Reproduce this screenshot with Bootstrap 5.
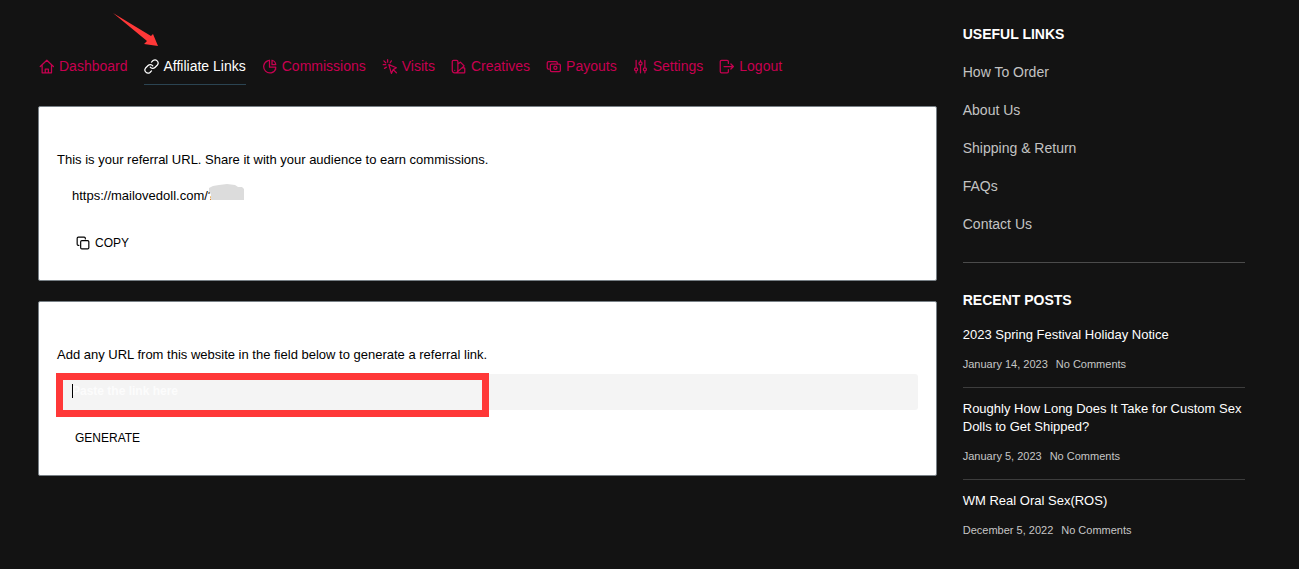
<!DOCTYPE html>
<html lang="en">
<head>
<meta charset="utf-8">
<meta name="viewport" content="width=device-width, initial-scale=1">
<title>Affiliate Links</title>
<link href="https://cdn.jsdelivr.net/npm/bootstrap@5.3.0/dist/css/bootstrap.min.css" rel="stylesheet">
<style>
  body { background: #131313; color: #000; font: 13px/18px "Liberation Sans", Arial, sans-serif; }
  .page { padding: 25px 54px 20px 38px; border-bottom: 1px solid #000; }
  .page > .row { --bs-gutter-x: 26px; }
  a { color: inherit; text-decoration: none; }
  .portal-nav { gap: 8px 16px; padding: 31px 0 21px 1px; font-size: 14px; line-height: 20px; color: #c70050; }
  .portal-nav .nav-link { display: flex; align-items: center; gap: 5px; padding: 0 0 8px; border-bottom: 1px solid transparent; color: inherit; }
  .portal-nav .nav-link.active { color: #fff; border-color: #2b4452; }
  .nav-link svg { width: 15px; height: 15px; }
  .line-icon { fill: none; stroke: currentColor; stroke-width: 2; stroke-linecap: round; stroke-linejoin: round; }
  .panel { background: #fff; border: 1px solid #788086; border-radius: 2px; padding: 44px 18px 24px; min-height: 175px; }
  .panel + .panel { margin-top: 20px; }
  .ref-url { padding: 18px 15px 28px; }
  .hidden-code { left: 1px; top: -3px; }
  .plain-btn { border: 0; background: none; padding: 0 18px; font-size: 12px; line-height: 20px; font-weight: 500; color: #000; display: flex; align-items: center; gap: 5px; }
  .plain-btn svg { width: 14px; height: 14px; }
  .copy-btn { padding-left: 19px; }
  .url-box { margin: 10px 0 18px; }
  .url-field { background: #f4f4f4; border: 0; border-radius: 3px; height: 36px; padding: 0 15px 3px; font-size: 12px; }
  .url-field:focus { background: #f4f4f4; box-shadow: none; }
  .url-field::placeholder { color: #fcfcfc; font-weight: 700; }
  .mark-box { top: -1px; left: -1px; width: 433px; max-width: 100%; height: 44px; border: 7px solid #ff3838; pointer-events: none; }
  .caret { top: 10px; left: 15px; width: 1px; height: 14px; background: #000; }
  .mark-arrow { top: -13px; left: 74px; width: 48px; height: 36px; }
  .side-title { font-size: 14px; line-height: 18px; font-weight: 700; margin: 0; color: #fff; }
  .posts-title { padding: 28px 0 17px; }
  .side-links { font-size: 14px; line-height: 20px; color: #c3c3c3; padding: 19px 0 28px; border-bottom: 1px solid #4b4b4b; display: grid; gap: 18px; }
  .post { color: #fff; padding-bottom: 15px; }
  .post + .post { border-top: 1px solid #3d3d3d; padding-top: 12px; }
  .post-meta { color: #c6c6c6; font-size: 11px; line-height: 16px; margin-top: 12px; gap: 8px; }
</style>
</head>
<body>
<div class="page container-fluid min-vh-100">
  <div class="row">
    <main class="col-lg-9">
      <nav class="nav portal-nav position-relative" aria-label="Affiliate portal">
        <svg class="mark-arrow position-absolute" viewBox="0 0 48 36" aria-hidden="true"><path d="M1 1 L39 24 L41 22 L46 34 L32 32 L35 29 Z" fill="#ff3838"/></svg>
        <a class="nav-link" href="#"><svg class="line-icon" viewBox="0 0 24 24"><path d="M2 12 12.500 2 23 12M5 10v12h15V10M10 22v-6h5v6"/></svg>Dashboard</a>
        <a class="nav-link active" href="#" aria-current="page"><svg class="line-icon" viewBox="0 0 24 24"><path d="M10 13a5 5 0 0 0 7.5.5l4-4a5 5 0 0 0-7-7l-2.500 2.500M14 11a5 5 0 0 0-7.500-.5l-4 4a5 5 0 0 0 7 7l2.500-2.500"/></svg>Affiliate Links</a>
        <a class="nav-link" href="#"><svg class="line-icon" viewBox="0 0 24 24"><path d="M9 3a10 10 0 1 0 13 13M12 2a10 10 0 0 0-3 1M12 2v11h10a10 10 0 0 1-1 4M16 2v7h6a8 8 0 0 0-6-7z"/></svg>Commissions</a>
        <a class="nav-link" href="#"><svg class="line-icon" viewBox="0 0 24 24"><path d="m11 9 12 5-5 3-3 6zM18 17l5 5M9 1v4M2 9h4M15 3l-2 3M4 15l3-2M3 3l3 3"/></svg>Visits</a>
        <a class="nav-link" href="#"><svg class="line-icon" viewBox="0 0 24 24"><path d="M2 4a2 2 0 0 1 2-2h5a2 2 0 0 1 2 2v14a4 4 0 0 1-4 4H6a4 4 0 0 1-4-4zM11 8l4-3 6 6-11 10M18 14h3a1 1 0 0 1 1 1v6a1 1 0 0 1-1 1H7M6 18v.1"/></svg>Creatives</a>
        <a class="nav-link" href="#"><svg class="line-icon" viewBox="0 0 24 24"><path d="M5 16H4a2 2 0 0 1-2-2V6a2 2 0 0 1 2-2h12a2 2 0 0 1 2 2v2M9 8h12a2 2 0 0 1 2 2v8a2 2 0 0 1-2 2H9a2 2 0 0 1-2-2v-8a2 2 0 0 1 2-2z"/><circle cx="15" cy="14" r="2.500"/></svg>Payouts</a>
        <a class="nav-link" href="#"><svg class="line-icon" viewBox="0 0 24 24"><path d="M5 2v11M5 20v2M12 2v2M12 10v12M19 2v11M19 20v2"/><circle cx="5" cy="16.500" r="2.500"/><circle cx="12" cy="7" r="2.500"/><circle cx="19" cy="16.500" r="2.500"/></svg>Settings</a>
        <a class="nav-link" href="#"><svg class="line-icon" viewBox="0 0 24 24"><path d="M15 7V4a2 2 0 0 0-2-2H4a2 2 0 0 0-2 2v16a2 2 0 0 0 2 2h9a2 2 0 0 0 2-2v-3M8 12h15M19 8l4 4-4 4"/></svg>Logout</a>
      </nav>

      <section class="panel">
        <div>This is your referral URL. Share it with your audience to earn commissions.</div>
        <div class="ref-url d-flex">https://mailovedoll.com/<span class="position-relative">?<svg class="hidden-code position-absolute" width="36" height="17" viewBox="0 0 36 17" aria-hidden="true"><path d="M0 4 4 2 10 1 18 0 26 1 29 3 33 3 35 5V16H2V10L0 8Z" fill="#dcdcdc"/></svg></span></div>
        <button type="button" class="plain-btn copy-btn"><svg class="line-icon" viewBox="0 0 24 24"><rect x="8" y="8" width="14" height="14" rx="2"/><path d="M5 16H4a2 2 0 0 1-2-2V4a2 2 0 0 1 2-2h10a2 2 0 0 1 2 2v1"/></svg>COPY</button>
      </section>

      <section class="panel">
        <label for="link-url" class="d-block">Add any URL from this website in the field below to generate a referral link.</label>
        <div class="url-box position-relative">
          <input id="link-url" type="text" class="form-control url-field" placeholder="Paste the link here">
          <span class="caret position-absolute"></span>
          <span class="mark-box position-absolute"></span>
        </div>
        <button type="button" class="plain-btn">GENERATE</button>
      </section>
    </main>

    <aside class="col-lg-3">
      <h2 class="side-title">USEFUL LINKS</h2>
      <nav class="side-links" aria-label="Useful links">
        <a href="#">How To Order</a>
        <a href="#">About Us</a>
        <a href="#">Shipping &amp; Return</a>
        <a href="#">FAQs</a>
        <a href="#">Contact Us</a>
      </nav>
      <h2 class="side-title posts-title">RECENT POSTS</h2>
      <article class="post">
        <a href="#">2023 Spring Festival Holiday Notice</a>
        <div class="post-meta d-flex"><span>January 14, 2023</span><a href="#">No Comments</a></div>
      </article>
      <article class="post">
        <a href="#">Roughly How Long Does It Take for Custom Sex Dolls to Get Shipped?</a>
        <div class="post-meta d-flex"><span>January 5, 2023</span><a href="#">No Comments</a></div>
      </article>
      <article class="post">
        <a href="#">WM Real Oral Sex(ROS)</a>
        <div class="post-meta d-flex"><span>December 5, 2022</span><a href="#">No Comments</a></div>
      </article>
    </aside>
  </div>
</div>
<script src="https://cdn.jsdelivr.net/npm/bootstrap@5.3.0/dist/js/bootstrap.bundle.min.js"></script>
</body>
</html>
